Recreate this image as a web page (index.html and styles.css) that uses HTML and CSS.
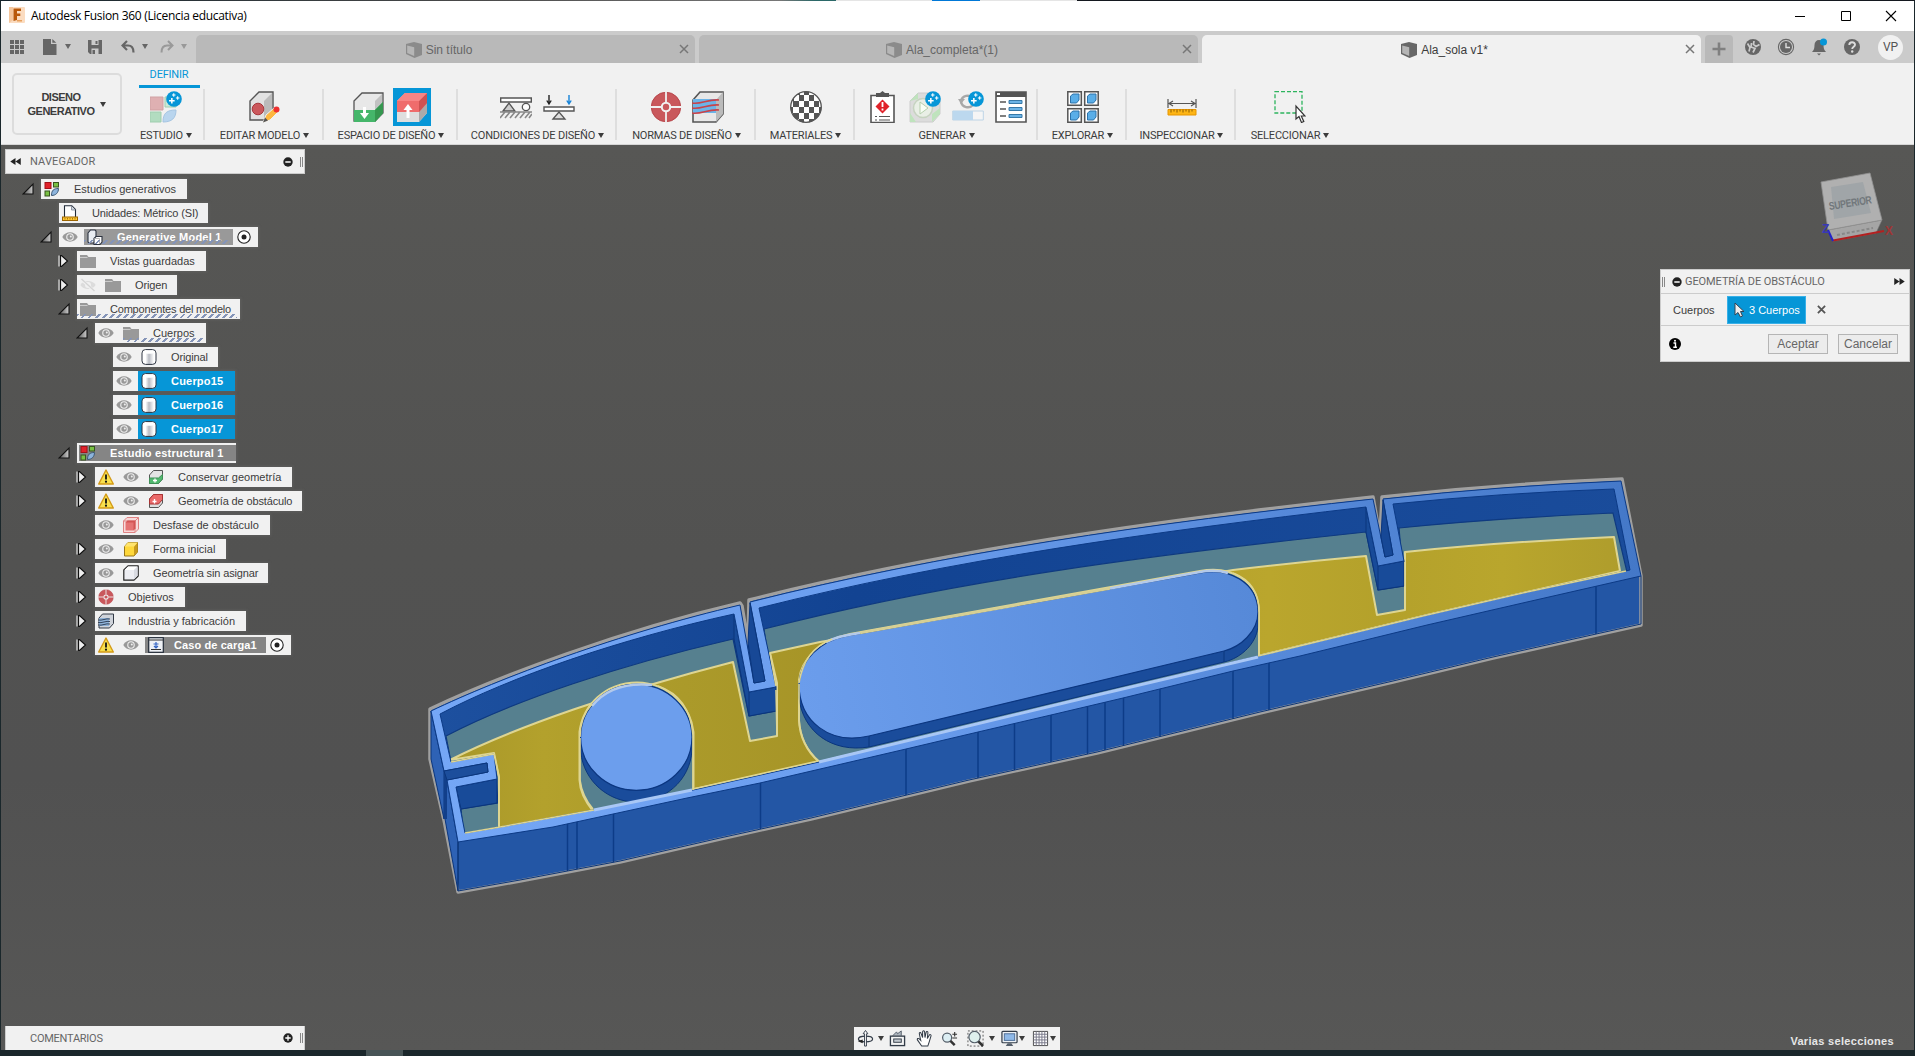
FILE: index.html
```html
<!DOCTYPE html>
<html lang="es">
<head>
<meta charset="utf-8">
<title>Autodesk Fusion 360 (Licencia educativa)</title>
<link rel="stylesheet" href="styles.css">
</head>
<body>
<svg class="sprite" aria-hidden="true">
  <defs>
    <linearGradient id="cyl" x1="0" x2="1"><stop offset="0" stop-color="#fff"/><stop offset=".25" stop-color="#fff"/><stop offset=".5" stop-color="#b9bcc4"/><stop offset=".85" stop-color="#fff"/></linearGradient>
    <linearGradient id="tri" x1="0" x2="1"><stop offset="0" stop-color="#555"/><stop offset="1" stop-color="#ccc"/></linearGradient>
    <symbol id="eye" viewBox="0 0 16 16"><path d="M.3 8C3.5 1.800 12.500 1.800 15.700 8 12.500 14.200 3.500 14.200 .3 8z" fill="#999"/><circle cx="8" cy="8" r="3.800" fill="#eee"/><circle cx="8" cy="8" r="2.700" fill="#999"/><circle cx="8.800" cy="7.600" r="1" fill="#eee"/></symbol>
    <symbol id="eye-off" viewBox="0 0 16 16"><path d="M.3 8C3.500 2.800 12.500 2.800 15.700 8 12.500 13.200 3.500 13.200 .3 8z" fill="#dcdcdc"/><circle cx="8" cy="8" r="3" fill="#f1f1f1"/><path d="M1 2l13 12" stroke="#f1f1f1" stroke-width="3"/><path d="M1.500 2l13 12" stroke="#d4d4d4" stroke-width="1.300"/></symbol>
    <symbol id="folder" viewBox="0 0 16 16"><path d="M0 2h7l1.500 2H16v11H0z" fill="#999"/><path d="M0 4.500h7.500" stroke="#ccc"/></symbol>
    <symbol id="body" viewBox="0 0 16 16"><rect x="1" y=".6" width="14" height="14.800" rx="3.500" fill="url(#cyl)" stroke="#2c3340"/><path d="M1.800 3.500C4 5.300 12 5.300 14.200 3.500V2.500L11.500 1.200H4.500L1.800 2.500z" fill="#fff"/></symbol>
    <symbol id="study" viewBox="0 0 16 16"><rect x="1" y="1.500" width="6" height="6" fill="#e0222a" stroke="#a31119"/><rect x="9.500" y="1.500" width="5" height="4.500" fill="#78c043" stroke="#38551f"/><rect x="1" y="10" width="4.500" height="5" fill="#78c043" stroke="#38551f"/><path d="M7.500 14.500c0-5 2-7 7-7 0 4-2.500 7-7 7z" fill="#8db4dc" stroke="#3c5875"/></symbol>
    <symbol id="units" viewBox="0 0 16 16"><path d="M2.500 12V.7h7.300L13.500 4.500V12" fill="#fff" stroke="#222b38" stroke-width="1.100"/><path d="M9.500 1v4h4" fill="#cfd6df" stroke="#6b7686" stroke-width=".7"/><rect x=".5" y="12" width="15" height="3.500" fill="#ffc932" stroke="#9b6400"/><path d="M3 13v1.500M5.500 13v1.500M8 13v1.500M10.500 13v1.500M13 13v1.500" stroke="#9b6400" stroke-width=".8"/></symbol>
    <symbol id="component" viewBox="0 0 16 16"><path d="M1 4L3.500 1h4.500l1 1v6l-2 6H2L1 13z" fill="#e9edf2" stroke="#2c3340" stroke-width="1.100"/><path d="M7 9.500L9 7.500h6V13l-2 2.500H7z" fill="#fff" stroke="#2c3340" stroke-width="1.100"/><path d="M7 9.500h5.500V15" fill="none" stroke="#aaa" stroke-width=".8"/></symbol>
    <symbol id="radio" viewBox="0 0 16 16"><circle cx="8" cy="8" r="6.200" fill="#fff" stroke="#222" stroke-width="1.100"/><circle cx="8" cy="8" r="2.500" fill="#222"/></symbol>
    <symbol id="warn" viewBox="0 0 16 16"><path d="M8 1L15.300 15H.7z" fill="#f8e04e" stroke="#d49a17" stroke-width="1.400" stroke-linejoin="round"/><path d="M8 5.500v5" stroke="#111" stroke-width="1.800"/><circle cx="8" cy="12.700" r="1.100" fill="#111"/></symbol>
    <symbol id="keep" viewBox="0 0 16 16"><path d="M1.500 6L5.500 1.500h9V10L10.500 14.500h-9z" fill="#e4e4e4" stroke="#555"/><path d="M1.500 9h9l4-3.500V10l-4 4.500h-9z" fill="#52b96f" stroke="#3f9157"/><path d="M5 11.500h4M7 9.500v4" stroke="#fff" stroke-width="1.300"/></symbol>
    <symbol id="obst" viewBox="0 0 16 16"><path d="M1.500 6L5.500 1.500h9V10L10.500 14.500h-9z" fill="#ddd" stroke="#555"/><path d="M1.500 6l4-4.500h9V6.500l-4 4.500h-9z" fill="#ea6a6a" stroke="#a33"/><path d="M4.500 8.500h4M6.500 6v4.500" stroke="#fff" stroke-width="1.300"/></symbol>
    <symbol id="offset" viewBox="0 0 16 16"><path d="M.5 4L4 .5h11.500V12L12 15.500H.5zM.5 4H12v11.500M12 4L15.500 .5" fill="#f7dada" stroke="#df8282"/><path d="M2.500 5.500l2-2h8v8l-2 2" fill="#d35454"/><rect x="2.500" y="5.500" width="8" height="8" fill="#e57373"/></symbol>
    <symbol id="form" viewBox="0 0 16 16"><path d="M1.500 5.500L5 1.500h9.500V11L11 15H1.500z" fill="#ffd83b" stroke="#98771a"/><path d="M11 5.500l3.500-4V11L11 15z" fill="#c99b1d"/><path d="M1.500 5.500L5 1.500h9.500l-3.500 4z" fill="#ffe46e"/></symbol>
    <symbol id="plaincube" viewBox="0 0 16 16"><path d="M.8 5L5 .8h10.200V11L11 15.200H.8z" fill="#edeef3" stroke="#222" stroke-width="1.200" stroke-linejoin="round"/><path d="M1.500 5L5 1.500h9.500L11 5z" fill="#fff"/><path d="M11 5l3.600-3.600v9.400L11 14.500z" fill="#d9dbe2"/></symbol>
    <symbol id="target" viewBox="0 0 32 32"><circle cx="16" cy="16" r="10" fill="none" stroke="#c9585c" stroke-width="9.500"/><circle cx="16" cy="16" r="14.700" fill="none" stroke="#b8474c"/><circle cx="16" cy="16" r="3.200" fill="#c9585c"/><path d="M16 0v11M16 21v11M0 16h11M21 16h11" stroke="#f1f1f1" stroke-width="1.800"/></symbol>
    <symbol id="fab" viewBox="0 0 32 32"><path d="M1 9L8 1h23v22l-7 8H1z" fill="#e8e8e8" stroke="#555" stroke-width="1.600"/><path d="M24 9l7-8v22l-7 8z" fill="#bbb"/><path d="M1 8h23v14H1z" fill="#6cb4e8"/><path d="M0 12c8 2 16-4 27-3M0 17c8 2 16-4 27-3M0 22c8 2 16-4 27-3" fill="none" stroke="#c8434a" stroke-width="1.600"/></symbol>
    <symbol id="fab-s" viewBox="0 0 16 16"><path d="M1 5L4.500 1h11v9.500L11.500 15H1z" fill="#cfd3da" stroke="#333a46"/><path d="M1 5h10v8H1z" fill="#8fb3d9"/><path d="M0 7c4 1 8-2 12-1M0 9.500c4 1 8-2 12-1M0 12c4 1 8-2 12-1" fill="none" stroke="#34445c"/></symbol>
    <symbol id="load" viewBox="0 0 16 16"><rect x=".7" y=".7" width="14.600" height="14.600" fill="#eef1f6" stroke="#222b38" stroke-width="1.200"/><path d="M1 3h14M3 12.500h10" stroke="#333"/><path d="M8 5v6M6 9l2 2 2-2M5.500 7h5" fill="none" stroke="#3465c4" stroke-width="1.200"/></symbol>
    <symbol id="open" viewBox="0 0 12 12"><path d="M11 1v10H1z" fill="url(#tri)" stroke="#111" stroke-width="1.100"/></symbol>
    <symbol id="closed" viewBox="0 0 12 14"><path d="M2.500 1.500h1L9.500 7l-6 5.500h-1z" fill="#eee" stroke="#111" stroke-width="1.200"/><path d="M1 1.500v11" stroke="#fff"/></symbol>
    <symbol id="doc" viewBox="0 0 16 16"><path d="M8 0l8 2v11l-7.500 3L0 12V2z" fill="#676767"/><path d="M1.200 3.500l7 1.800V14l-7-3z" fill="#b5b5b5"/></symbol>
    <symbol id="plus" viewBox="0 0 20 20"><circle cx="10" cy="10" r="9.800" fill="#0696d7"/><path d="M3.800 12.200h7M7.300 8.700v7" stroke="#fff" stroke-width="1.900"/><path d="M7.500 5h4.400M9.700 2.800v4.400M12.400 8.800h4.400M14.600 6.600V11" stroke="#fff" stroke-width="1.300"/></symbol>
  </defs>
</svg>

<div class="window">
  <header class="titlebar">
    <svg class="logo" viewBox="0 0 16 16"><rect width="16" height="16" rx="1" fill="#fbdcc0"/><path d="M0 0h4v13L0 16z" fill="#f5c79d"/><path d="M4.500 1.500H12V4H8v2.500h3.300V9H8v4l-3.500 1z" fill="#b9590a"/><path d="M8 13h5v1.500H8z" fill="#e8a05c"/></svg>
    <span class="title">Autodesk Fusion 360 (Licencia educativa)</span>
    <div class="winbtns">
      <svg viewBox="0 0 12 12"><path d="M1 6.500h10" stroke="#000"/></svg>
      <svg viewBox="0 0 12 12"><path d="M1.500 1.500h9v9h-9z" fill="none" stroke="#000"/></svg>
      <svg viewBox="0 0 12 12"><path d="M1 1l10 10M11 1L1 11" stroke="#000" stroke-width="1.100"/></svg>
    </div>
  </header>

  <nav class="docbar">
    <div class="quick">
      <svg class="q q1" viewBox="0 0 14 14"><path d="M0 0h4v4H0zM5 0h4v4H5zM10 0h4v4h-4zM0 5h4v4H0zM5 5h4v4H5zM10 5h4v4h-4zM0 10h4v4H0zM5 10h4v4H5zM10 10h4v4h-4z" fill="#666"/></svg>
      <svg class="q q2" viewBox="0 0 14 16"><path d="M0 0h8v5h5.500v11H0z" fill="#666"/><path d="M9.300 0v3.800h4z" fill="#666"/></svg><i class="car"></i>
      <svg class="q q3" viewBox="0 0 14 14"><path d="M0 0h14v14H2L0 12z" fill="#666"/><path d="M3.500 0h7v5h-7zM3.500 8.500h7V14h-7z" fill="#cbcbcb"/><path d="M7.500 1h2v3h-2zM4.500 10h2.500v4H4.500z" fill="#666"/></svg>
      <svg class="q q4" viewBox="0 0 14 14"><path d="M6 1L1.500 5.500 6 10M1.500 5.500H7c4 0 5.500 2.500 5.500 7" fill="none" stroke="#666" stroke-width="2.200"/></svg><i class="car"></i>
      <svg class="q q5" viewBox="0 0 14 14"><path d="M8 1l4.500 4.500L8 10M12.500 5.500H7c-4 0-5.500 2.500-5.500 7" fill="none" stroke="#999" stroke-width="2"/></svg><i class="car dim"></i>
    </div>
    <div class="tab"><svg class="dim"><use href="#doc"/></svg><span>Sin título</span><svg class="x" viewBox="0 0 10 10"><path d="M1 1l8 8M9 1L1 9" stroke="#777" stroke-width="1.500"/></svg></div>
    <div class="tab"><svg class="dim"><use href="#doc"/></svg><span>Ala_completa*(1)</span><svg class="x" viewBox="0 0 10 10"><path d="M1 1l8 8M9 1L1 9" stroke="#777" stroke-width="1.500"/></svg></div>
    <div class="tab active"><svg><use href="#doc"/></svg><span>Ala_sola v1*</span><svg class="x" viewBox="0 0 10 10"><path d="M1 1l8 8M9 1L1 9" stroke="#777" stroke-width="1.500"/></svg></div>
    <div class="newtab"><svg viewBox="0 0 14 14"><path d="M7 .5v13M.5 7h13" stroke="#808080" stroke-width="2.600"/></svg></div>
    <div class="account">
      <svg viewBox="0 0 18 18"><circle cx="9" cy="9" r="8" fill="#666"/><path d="M3.500 5.500L6 9.500l-1 4M7.500 5l-.5 4 4 1.500-2 4M10 3l-.5 3.500L12 8.500l3.500-2" fill="none" stroke="#cbcbcb" stroke-width="1.700"/></svg>
      <svg viewBox="0 0 18 18"><circle cx="9" cy="9" r="7.600" fill="none" stroke="#666" stroke-width="1.100"/><circle cx="9" cy="9" r="6" fill="#666"/><path d="M9 5v4.500h4" fill="none" stroke="#ddd" stroke-width="1.400"/></svg>
      <svg viewBox="0 0 18 18"><path d="M2 14c2-2 2.500-4 2.500-7C4.500 4 6.500 2 9 2s4.500 2 4.500 5c0 3 .5 5 2.500 7z" fill="#666"/><path d="M7 15.500h4L9 17.500z" fill="#666"/><circle cx="13.500" cy="4" r="3.500" fill="#0696d7"/></svg>
      <svg viewBox="0 0 18 18"><circle cx="9" cy="9" r="8" fill="#666"/><path d="M6.300 7c0-3.700 5.700-3.500 5.700-.3 0 2-2.800 2-2.800 4.300" fill="none" stroke="#ddd" stroke-width="1.900"/><circle cx="9.200" cy="13.500" r="1.200" fill="#ddd"/></svg>
      <span class="avatar">VP</span>
    </div>
  </nav>

  <section class="ribbon">
    <div class="space"><div class="spacebtn"><span>DISENO<br>GENERATIVO</span><i class="car"></i></div></div>
    <div class="grp g1">
      <div class="rtab">DEFINIR</div>
      <div class="icons"><svg viewBox="0 0 32 32"><path d="M0 6h13v13H0z" fill="#dfb0b2" stroke="#d0a1a3"/><path d="M0 21h11v10H0z" fill="#b2dcc0" stroke="#9fceaf"/><path d="M15 6h11v10H15z" fill="#cde8d6" stroke="#9fceaf"/><path d="M13 31c0-9 4-12 13-12 0 8-4 12-13 12z" fill="#b9d5ee" stroke="#a5c5e2"/><use href="#plus" x="16" y="0" width="16" height="16"/></svg></div>
      <div class="lbl">ESTUDIO<i class="car"></i></div>
    </div>
    <div class="grp g2"><div class="icons"><svg viewBox="0 0 32 32"><path d="M1 10L10 1h14v19l-9 9H1z" fill="#e2e2e2" stroke="#555" stroke-width="1.400"/><path d="M15 10l8-8v18l-8 8z" fill="#bbb"/><circle cx="9" cy="18" r="5.800" fill="#cb585c" stroke="#a8383d"/><path d="M14 31.500l3-7.500 8-7 4 4-8 8z" fill="#fdb740" stroke="#f1f1f1"/><path d="M14 31.500l2-5 3 3z" fill="#555"/><circle cx="27.500" cy="18.500" r="3" fill="#ee3030"/></svg></div><div class="lbl">EDITAR MODELO<i class="car"></i></div></div>
    <div class="grp g3"><div class="icons"><svg viewBox="0 0 32 32"><path d="M1 10L9 2h21v20l-8 8H1z" fill="#e8e8e8" stroke="#555" stroke-width="1.300"/><path d="M22 10l7-7v18l-7 8z" fill="#c2c2c2"/><path d="M1 19h21l8-8v11l-8 9H1z" fill="#45b66a"/><path d="M22 19l8-8v11l-8 9z" fill="#35974f"/><path d="M11.500 16v8" stroke="#fff" stroke-width="3"/><path d="M7 22h9l-4.500 6z" fill="#fff"/></svg><span class="sel"><svg viewBox="0 0 32 32"><path d="M1 10L9 2h22v20l-8 9H1z" fill="#dedede"/><path d="M23 19l8-8v11l-8 9z" fill="#aaa"/><path d="M1 10L9 2h22v10l-8 9H1z" fill="#ef6c6c"/><path d="M23 10l8-8v10l-8 9z" fill="#cd5252"/><path d="M1 10L9 2h22l-8 8z" fill="#f78585"/><path d="M12 17v10" stroke="#fff" stroke-width="3"/><path d="M7.500 19h9L12 13z" fill="#fff"/></svg></span></div><div class="lbl">ESPACIO DE DISEÑO<i class="car"></i></div></div>
    <div class="grp g4"><div class="icons"><svg viewBox="0 0 32 32"><path d="M.7 7h30.600v4H.7z" fill="#fff" stroke="#555" stroke-width="1.400"/><path d="M3 20l6-8 6 8z" fill="#ccc" stroke="#555" stroke-width="1.300"/><circle cx="26" cy="16" r="3.700" fill="#fff" stroke="#555" stroke-width="1.300"/><path d="M0 21h32M0 27l5-6M5 27l5-6M10 27l5-6M15 27l5-6M20 27l5-6M25 27l5-6M29 27l3-4" stroke="#888" stroke-width="1.600"/></svg><svg viewBox="0 0 32 32"><path d="M1 16h30v4H1z" fill="#fff" stroke="#555" stroke-width="1.400"/><path d="M10 28l6-7 6 7z" fill="#ddd" stroke="#555" stroke-width="1.300"/><path d="M6 4v9M3.800 9.500L6 13l2.200-3.500" fill="none" stroke="#222" stroke-width="1.400"/><path d="M26 4v9M23.800 9.500L26 13l2.200-3.500" fill="none" stroke="#1683d8" stroke-width="1.400"/></svg></div><div class="lbl">CONDICIONES DE DISEÑO<i class="car"></i></div></div>
    <div class="grp g5"><div class="icons"><svg viewBox="0 0 32 32"><use href="#target"/></svg><svg viewBox="0 0 32 32"><use href="#fab"/></svg></div><div class="lbl">NORMAS DE DISEÑO<i class="car"></i></div></div>
    <div class="grp g6"><div class="icons"><svg viewBox="0 0 32 32"><defs><clipPath id="ball"><circle cx="16" cy="16" r="15.500"/></clipPath></defs><g clip-path="url(#ball)"><path d="M0 0h32v32H0z" fill="#fff"/><path d="M4 0h6v4H4zM14 0h5v4h-5zM24 0h5v4h-5zM0 4h4v6H0zM9 4h5v6H9zM19 4h5v6h-5zM29 4h3v6h-3zM3 10h6v6H3zM14 10h5v6h-5zM24 10h5v6h-5zM0 16h3v6H0zM9 16h5v6H9zM19 16h5v6h-5zM29 16h3v6h-3zM3 22h6v6H3zM14 22h5v6h-5zM24 22h5v6h-5zM9 28h5v4H9zM19 28h5v4h-5z" fill="#555"/></g><circle cx="16" cy="16" r="15.300" fill="none" stroke="#555" stroke-width="1.300"/></svg></div><div class="lbl">MATERIALES<i class="car"></i></div></div>
    <div class="grp g7"><div class="icons"><svg viewBox="0 0 32 32"><path d="M5 4.500h23v27H5z" fill="#fff" stroke="#555" stroke-width="1.600"/><path d="M10 2h4l2.500-2L19 2h4v4H10z" fill="#555"/><path d="M16.500 8.500l7 7-7 7-7-7z" fill="#e0222a"/><path d="M16.500 11v5M16.500 17.500v2" stroke="#fff" stroke-width="1.800"/><path d="M13 25.500h11M13 29h11M9 25.500h2M9 29h2" stroke="#555" stroke-width="1.200"/></svg><svg viewBox="0 0 32 32"><path d="M1 10L9 2h15l7 7v14l-7 8H1z" fill="#dcdcdc" stroke="#ccc"/><path d="M1 22l6 9H1zM23 23l8-6v6l-8 8zM1 10l8-8v6z" fill="#bfe3bd"/><circle cx="14" cy="17" r="9.500" fill="#e9efe6" stroke="#c6d3c0" stroke-width="1.500"/><path d="M11 11l8 6-8 6z" fill="#f8fff5" stroke="#b6cfae"/><use href="#plus" x="16" y="0" width="16" height="16"/></svg><svg viewBox="0 0 32 32"><path d="M21 7a7 7 0 00-12 3M9 11a7 7 0 0012 3" fill="none" stroke="#a8a8a8" stroke-width="2.500"/><path d="M6 8l7 0-4 5z" fill="#a8a8a8"/><path d="M.7 20h30.600v9H.7z" fill="#f5f5f5" stroke="#bdd4e6"/><path d="M1 20h20v9H1z" fill="#bcd8ee"/><use href="#plus" x="16" y="0" width="16" height="16"/></svg><svg viewBox="0 0 32 32"><path d="M1 1h30v30H1z" fill="#fff" stroke="#555" stroke-width="1.600"/><path d="M1 1h30v5H1z" fill="#555"/><path d="M2 2h3v2H2z" fill="#fff"/><path d="M5 11h6M5 18h6M5 25h6" stroke="#555" stroke-width="1.500"/><path d="M14 9.500h13v3H14zM14 16.500h13v3H14zM14 23.500h13v3H14z" fill="#6bb3e6" stroke="#3679a9"/></svg></div><div class="lbl">GENERAR<i class="car"></i></div></div>
    <div class="grp g8"><div class="icons"><svg viewBox="0 0 32 32"><path d="M.8.800h13.500v13.500H.8zM17.700.800h13.500v13.500H17.700zM.8 17.700h13.500v13.500H.8zM17.700 17.700h13.500v13.500H17.700z" fill="#fff" stroke="#555" stroke-width="1.500"/><path d="M3.500 5l2.500-2h6v6l-2.500 3h-6zM20.500 5l2.500-2h6v6l-2.500 3h-6zM3.500 22l2.500-2h6v6l-2.500 3h-6zM20.500 22l2.500-2h6v6l-2.500 3h-6z" fill="#5aaee8" stroke="#2d73aa"/></svg></div><div class="lbl">EXPLORAR<i class="car"></i></div></div>
    <div class="grp g9"><div class="icons"><svg viewBox="0 0 32 32"><path d="M2 8v9M30 8v9M3 12.500h26M7 10l-4 2.500L7 15M25 10l4 2.500L25 15" fill="none" stroke="#555" stroke-width="1.200"/><path d="M2 18.500h28v5.500H2z" fill="#fdb515" stroke="#e79500"/><path d="M5 18.500v3M8 18.500v2M11 18.500v3M14 18.500v2M17 18.500v3M20 18.500v2M23 18.500v3M26 18.500v2" stroke="#8a5a00"/></svg></div><div class="lbl">INSPECCIONAR<i class="car"></i></div></div>
    <div class="grp g10"><div class="icons"><svg viewBox="0 0 32 32"><path d="M1 .7h27v21.300H1z" fill="none" stroke="#2db45d" stroke-width="1.300" stroke-dasharray="4 2"/><path d="M22 15v13l3-2.500 2.500 6 2.300-1-2.500-5.500H31z" fill="#fff" stroke="#333" stroke-width="1.200"/></svg></div><div class="lbl">SELECCIONAR<i class="car"></i></div></div>
  </section>

  <main class="canvas">
    <svg class="scene" viewBox="1 145 1913 905">
      <defs>
        <linearGradient id="rim" gradientUnits="userSpaceOnUse" x1="430" y1="0" x2="1641" y2="0"><stop offset="0" stop-color="#75a7f6"/><stop offset=".35" stop-color="#6b9eef"/><stop offset="1" stop-color="#4478c8"/></linearGradient>
        <linearGradient id="pill" gradientUnits="userSpaceOnUse" x1="799" y1="690" x2="1258" y2="600"><stop offset="0" stop-color="#6b9dec"/><stop offset="1" stop-color="#5689d8"/></linearGradient>
        <linearGradient id="floor" gradientUnits="userSpaceOnUse" x1="450" y1="0" x2="1620" y2="0"><stop offset="0" stop-color="#a89729"/><stop offset=".08" stop-color="#b3a12c"/><stop offset=".2" stop-color="#ab9a2a"/><stop offset=".33" stop-color="#a69427"/><stop offset=".7" stop-color="#baa62d"/><stop offset=".8" stop-color="#b4a12b"/><stop offset=".9" stop-color="#b9a62d"/><stop offset="1" stop-color="#af9d2c"/></linearGradient>
        <linearGradient id="wall" x1="0" y1="0" x2="1" y2="0"><stop offset="0" stop-color="#1d509f"/><stop offset=".35" stop-color="#124392"/><stop offset="1" stop-color="#1a4c9b"/></linearGradient>
        <clipPath id="front"><path d="M458 842L553 827 687 798 760 783 906 749 978 732 1051 715 1123 698 1233 671 1300 656 1427 625 1527 602 1641 576V624L1493 657 1393 681 1260 712 1097 752 969 780 811 818 720 838 620 861 520 880 458 891z"/></clipPath>
        <clipPath id="hole"><path d="M440 714C510 677 620 639 734 614L749 692 776 687 759 608C950 560 1150 532 1366 507L1378 566 1404 561 1393 504Q1500 493 1614 489L1630 570 1527 592 1427 615 1258 656 1097 695 819 762 693 790 593 810 500 827 465 833 456 787 497 779 494 754 451 762z"/></clipPath>
      </defs>
      <path d="M430 709C500 676 620 631 740 603L742 606 748 643 749 600C940 552 1150 521 1373 497L1380 537 1382 497Q1500 484 1622 479L1641 576V625L1493 658 1393 682 1260 713 1097 753 969 781 811 819 720 839 620 862 520 881 458 892 444 820 430 759z" fill="#2356a5" stroke="#a0a0a0" stroke-width="3.500" stroke-linejoin="round"/>
      <path d="M431 711L444 771V819L431 759zM447 780L458 842V891L445 819z" fill="#2e62b5" stroke="#0b367d"/>
      <path d="M444 771h3v48h-3z" fill="#123f8a"/>
      <g clip-path="url(#hole)">
        <path d="M430 480h1215v360H430z" fill="url(#wall)"/>
        <path d="M446 736C515 700 620 665 733 639L749 716 776 711 764 629C950 581 1150 555 1366 532L1378 590 1404 586 1399 528Q1500 518 1613 513L1627 572 1400 640 820 775 465 850 461 809 498 803 494 754 451 762z" fill="#56808f" stroke="#0f3a80" stroke-width="1.200"/>
        <path d="M450 760C515 727 620 691 733 662L750 741 777 736V683L770 653 820 642 1233 570Q1300 562 1366 556L1377 615 1405 610V552Q1500 542 1614 537L1620 571 1527 592 1427 615 1258 656 819 762 593 811 499 828V777L494 753z" fill="url(#floor)" stroke="#ded591" stroke-width="2" stroke-linejoin="round"/>
        <path d="M579.500 780V732C583 705 605 683 637 682.500 670 683 691 708 693.500 732V790L593 811Q580 795 579.500 780z" fill="#56808f" stroke="#ded591" stroke-width="2"/>
        <path d="M799 720V680C801 660 820 640 850 634L1200 571C1232 565 1259 582 1259 612V657L819 762Q800 745 799 720z" fill="#56808f" stroke="#ded591" stroke-width="2"/>
        <path d="M580.700 737.700V752C584 782 609 802 636 802S690 782 692 750V737.700z" fill="#1a4c9b" stroke="#0b367d"/>
        <path d="M799 684V698C803 732 832 753 869 747L1224 662C1242 658 1258 642 1258 624V612L1224 640z" fill="#1a4c9b" stroke="#0b367d"/>
        <path d="M869 735v12M1224 650v12" stroke="#0b367d"/>
      </g>
      <path d="M734 614V639L749 716 776 711V687L749 692zM1366 507V532L1378 590 1404 586V561L1378 566z" fill="#184b99" stroke="#0b367d"/>
      <path d="M749 692v24M1378 566v24" stroke="#0b367d"/>
      <path d="M456 787L497 779V803L461 809z" fill="#184b99" stroke="#0b367d"/>
      <path fill-rule="evenodd" d="M431 711C500 678 620 633 740 605L754 683 765 681 750 602C940 554 1150 523 1373 499L1385 557 1393 555 1383 499Q1500 486 1621 481L1641 576 1527 602 1427 625 1300 656 1233 671 1123 698 1051 715 978 732 906 749 760 783 687 798 553 827 458 842 447 780 488 772 487 763 444 771z M440 714C510 677 620 639 734 614L749 692 776 687 759 608C950 560 1150 532 1366 507L1378 566 1404 561 1393 504Q1500 493 1614 489L1630 570 1527 592 1427 615 1258 656 1097 695 819 762 693 790 593 810 500 827 465 833 456 787 497 779 494 754 451 762z" fill="url(#rim)" stroke="#0c3a86" stroke-width="1"/>
      <path d="M750 603L765 681 754 683 748 643zM1383 500L1393 555 1385 557 1381 537z" fill="#174896" stroke="#0b367d"/>
      <path d="M444 771L487 763 488 772 447 780z" fill="#1c4e9c" stroke="#0b367d"/>
      <path d="M451 762L494 754 499 777V827M776 690L777 736M1405 562V610M770 653L776 686M1626 571L1527 592 1427 615 1258 656M818 761L693 789M594 810L500 827 465 833" fill="none" stroke="#ded591" stroke-width="1.600"/>
      <ellipse cx="636.300" cy="737.300" rx="55.700" ry="53" fill="#6c9eed" stroke="#0b3680" stroke-width="1.200"/>
      <path d="M847 636L1200 573C1228 567 1258 582 1258 612 1258 632 1240 647 1224 651L869 736C830 745 799 722 799 684 800 660 820 641 847 636z" fill="url(#pill)" stroke="#0b3680" stroke-width="1.200"/>
      <path d="M592 706Q612 681 652 685M1110 588.500L1200 572Q1215 569 1228 573M826 642Q838 636 860 633" fill="none" stroke="#b3c9ea" stroke-width="2.600"/>
      <path d="M860 633L1110 588.500" stroke="#d6cf95" stroke-width="2.500"/>
      <path d="M594 810L692 790M819 762L1097 695 1258 657" fill="none" stroke="#a9c7f5" stroke-width="3"/>
      <path d="M693 735V790M799 684V720Q801 746 819 761M580 738V780Q582 796 593 809M1259 612V656M799 683Q804 650 832 639M1233 573Q1259 583 1259 612M658 686Q690 697 693 735M580 737Q580 717 592 704" fill="none" stroke="#ded591" stroke-width="1.600"/>
      <g clip-path="url(#front)"><path d="M567.500 780v130M577 780v130M613.500 780v130M760.500 740v130M906 720v130M978 700v130M1014.500 700v130M1051 680v130M1087.500 680v130M1105 660v130M1123.500 660v130M1160 640v130M1233 640v130M1269 630v130M1596 560v130" stroke="#0d3c88" stroke-width="1.500"/></g>
      <path d="M458 842v48M520 880L458 891M1641 576v48L1493 657 1393 681 1260 712 1097 752 969 780 811 818 720 838 620 861 520 880" fill="none" stroke="#0b3476"/>

      <g>
        <path d="M1828 230l54-10-6 13-43 8z" fill="#a5a5a5" stroke="#777" stroke-width=".6"/>
        <path d="M1821 182l49-9 12 47-54 10z" fill="#b0b0b0" stroke="#909090" stroke-width=".8"/>
        <path d="M1831 187l32-5 8 31-37 6z" fill="#a0a5a8"/>
        <path d="M1837 235l36-7" stroke="#888" stroke-width="2" stroke-dasharray="3 2"/>
        <path d="M1833 240.500l51-9.500" stroke="#b32020" stroke-width="2.200"/>
        <path d="M1828 230l5 11" stroke="#2323c8" stroke-width="2"/>
        <text class="cube" transform="translate(1829.500 210) rotate(-9) scale(.82 1.05)">SUPERIOR</text>
        <text class="axis ax" x="1885" y="235">X</text><text class="axis az" x="1822" y="233">Z</text>
      </g>
    </svg>

    <aside class="browser">
      <div class="phead"><svg class="rew" viewBox="0 0 12 8"><path d="M6 0v8L0 4zM12 0v8L6 4z" fill="#222"/></svg><span>NAVEGADOR</span><svg class="pm" viewBox="0 0 10 10"><circle cx="5" cy="5" r="4.700" fill="#222"/><path d="M2.300 5h5.400" stroke="#fff" stroke-width="1.500"/></svg><i class="grip"></i></div>
      <div class="tree">
        <div class="row l0"><svg class="tw"><use href="#open"/></svg><div class="box"><svg><use href="#study"/></svg><span>Estudios generativos</span></div></div>
        <div class="row l1 tight"><div class="box"><svg><use href="#units"/></svg><span>Unidades: Métrico (SI)</span></div></div>
        <div class="row l1"><svg class="tw"><use href="#open"/></svg><div class="box"><svg><use href="#eye"/></svg><div class="mark light hatch"><svg><use href="#component"/></svg><span>Generative Model 1</span></div><svg><use href="#radio"/></svg></div></div>
        <div class="row l2"><svg class="tw"><use href="#closed"/></svg><div class="box"><svg><use href="#folder"/></svg><span>Vistas guardadas</span></div></div>
        <div class="row l2 tight"><svg class="tw"><use href="#closed"/></svg><div class="box"><svg><use href="#eye-off"/></svg><svg><use href="#folder"/></svg><span>Origen</span></div></div>
        <div class="row l2 tighter"><svg class="tw"><use href="#open"/></svg><div class="box hatch"><svg><use href="#folder"/></svg><span>Componentes del modelo</span></div></div>
        <div class="row l3"><svg class="tw"><use href="#open"/></svg><div class="box"><svg><use href="#eye"/></svg><div class="sub hatch"><svg><use href="#folder"/></svg><span>Cuerpos</span></div></div></div>
        <div class="row l4 tight"><div class="box"><svg><use href="#eye"/></svg><svg><use href="#body"/></svg><span>Original</span></div></div>
        <div class="row l4"><div class="box"><svg><use href="#eye"/></svg><div class="mark blue"><svg><use href="#body"/></svg><span>Cuerpo15</span></div></div></div>
        <div class="row l4"><div class="box"><svg><use href="#eye"/></svg><div class="mark blue"><svg><use href="#body"/></svg><span>Cuerpo16</span></div></div></div>
        <div class="row l4"><div class="box"><svg><use href="#eye"/></svg><div class="mark blue"><svg><use href="#body"/></svg><span>Cuerpo17</span></div></div></div>
        <div class="row l2"><svg class="tw"><use href="#open"/></svg><div class="box study"><div class="mark"><svg><use href="#study"/></svg><span>Estudio estructural 1</span></div></div></div>
        <div class="row l3"><svg class="tw"><use href="#closed"/></svg><div class="box"><svg><use href="#warn"/></svg><svg><use href="#eye"/></svg><svg><use href="#keep"/></svg><span>Conservar geometría</span></div></div>
        <div class="row l3 tight"><svg class="tw"><use href="#closed"/></svg><div class="box"><svg><use href="#warn"/></svg><svg><use href="#eye"/></svg><svg><use href="#obst"/></svg><span>Geometría de obstáculo</span></div></div>
        <div class="row l3"><div class="box"><svg><use href="#eye"/></svg><svg><use href="#offset"/></svg><span>Desfase de obstáculo</span></div></div>
        <div class="row l3"><svg class="tw"><use href="#closed"/></svg><div class="box"><svg><use href="#eye"/></svg><svg><use href="#form"/></svg><span>Forma inicial</span></div></div>
        <div class="row l3 tight"><svg class="tw"><use href="#closed"/></svg><div class="box"><svg><use href="#eye"/></svg><svg><use href="#plaincube"/></svg><span>Geometría sin asignar</span></div></div>
        <div class="row l3"><svg class="tw"><use href="#closed"/></svg><div class="box"><svg><use href="#target"/></svg><span>Objetivos</span></div></div>
        <div class="row l3"><svg class="tw"><use href="#closed"/></svg><div class="box"><svg><use href="#fab-s"/></svg><span>Industria y fabricación</span></div></div>
        <div class="row l3"><svg class="tw"><use href="#closed"/></svg><div class="box"><svg><use href="#warn"/></svg><svg><use href="#eye"/></svg><div class="mark load"><svg><use href="#load"/></svg><span>Caso de carga1</span></div><svg><use href="#radio"/></svg></div></div>
      </div>
    </aside>

    <section class="dialog">
      <div class="dhead"><i class="grip"></i><svg class="pm" viewBox="0 0 10 10"><circle cx="5" cy="5" r="4.700" fill="#222"/><path d="M2.300 5h5.400" stroke="#fff" stroke-width="1.500"/></svg><span>GEOMETRÍA DE OBSTÁCULO</span><svg class="ff" viewBox="0 0 12 8"><path d="M0 0v8l6-4zM6 0v8l6-4z" fill="#222"/></svg></div>
      <div class="dbody"><label>Cuerpos</label><button class="pick"><svg viewBox="0 0 11 16"><path d="M1 1v12l3-2.500L6.500 15l2-1L6.500 9.500H10z" fill="#eee" stroke="#345" /></svg>3 Cuerpos</button><svg class="clr" viewBox="0 0 10 10"><path d="M1 1l8 8M9 1L1 9" stroke="#555" stroke-width="2"/></svg></div>
      <div class="dfoot"><svg class="info" viewBox="0 0 12 12"><circle cx="6" cy="6" r="6" fill="#000"/><path d="M4.500 5h2v4M4.300 9.300h3.600" stroke="#fff" stroke-width="1.400" fill="none"/><circle cx="6" cy="2.800" r="1" fill="#fff"/></svg><button>Aceptar</button><button>Cancelar</button></div>
    </section>

    <div class="comments"><span>COMENTARIOS</span><svg class="pm" viewBox="0 0 10 10"><circle cx="5" cy="5" r="4.700" fill="#222"/><path d="M2.300 5h5.400M5 2.300v5.400" stroke="#fff" stroke-width="1.300"/></svg><i class="grip"></i></div>

    <div class="navbar">
      <svg class="n1" viewBox="0 0 18 18"><ellipse cx="9" cy="9.500" rx="7.500" ry="3" fill="none" stroke="#333c48" stroke-width="1.300"/><path d="M8 17V4H6.500L9 .5 11.500 4H10v13z" fill="#fff" stroke="#333c48"/><path d="M1 12l5-2v4z" fill="#222"/></svg><i class="car"></i>
      <svg class="n2" viewBox="0 0 18 18"><path d="M4 6l4-4 1 2 4-3v5" fill="#aeb6bf" stroke="#555f6b"/><rect x="1.500" y="6.500" width="15" height="10" fill="#f5f5f5" stroke="#333c48" stroke-width="1.400"/><rect x="5" y="9.500" width="8" height="3.500" fill="#c4cad0" stroke="#333c48"/></svg>
      <svg class="n3" viewBox="0 0 18 18"><path d="M6 17L1.500 10.500C.8 9 2.500 8.500 3.500 9.500L5 11 3.500 4C3.300 2.500 5 2.300 5.400 3.700L7 8 7 2C7 .5 9 .5 9.100 2L9.500 8l1.200-5.500c.3-1.400 2-1.100 1.900.3L12 9l2-3.500c.7-1.300 2.300-.5 1.900.8L14 12.500 12.500 17z" fill="#fff" stroke="#333c48" stroke-width="1.100"/></svg>
      <svg class="n4" viewBox="0 0 18 18"><circle cx="6.500" cy="8" r="4.800" fill="#dceef3" stroke="#56606b" stroke-width="1.300"/><path d="M10 11.500l4.500 4.500" stroke="#333" stroke-width="2.600"/><path d="M12 4.500h5M14.500 2v5M12 8.500h5" stroke="#333" stroke-width="1.200"/></svg>
      <svg class="n5" viewBox="0 0 18 18"><path d="M1 1h16v16H1z" fill="none" stroke="#555" stroke-dasharray="2 2"/><circle cx="8" cy="7.500" r="6" fill="#dff0ee" stroke="#56606b" stroke-width="1.300"/><path d="M12 12l5 5" stroke="#333" stroke-width="2.800"/></svg><i class="car"></i>
      <svg class="n6" viewBox="0 0 18 18"><rect x="1" y="1.500" width="16" height="12" rx="1" fill="#eef2f6" stroke="#333c48" stroke-width="1.300"/><rect x="3.500" y="4" width="11" height="7" fill="#8fb9e8" stroke="#4c6d96"/><path d="M7 14h4l2 3H5z" fill="#555f6b"/></svg><i class="car"></i>
      <svg class="n7" viewBox="0 0 18 18"><path d="M1.500 1.500h15v15h-15z" fill="#fff" stroke="#444"/><path d="M4.500 1.500v15M7.500 1.500v15M10.500 1.500v15M13.500 1.500v15M1.500 4.500h15M1.500 7.500h15M1.500 10.500h15M1.500 13.500h15" stroke="#778"/></svg><i class="car"></i>
    </div>
    <div class="status">Varias selecciones</div>
  </main>
</div>
</body>
</html>
```
FILE: styles.css
```css
* { box-sizing: border-box; }
body {
  margin: 0;
  width: 1915px;
  height: 1056px;
  overflow: hidden;
  font: 11px "Liberation Sans", Arial, sans-serif;
  color: #3c3c3c;
  padding: 1px 1px 6px;
  background:
    linear-gradient(#475456, #475456) 366px 1050px / 37px 6px no-repeat,
    linear-gradient(90deg, #14232b 0, #4a4a4a 480px, #777 780px, #2b6868 815px 836px, #e5e5e5 836px 932px, #0078d7 932px 980px, #e5e5e5 980px 1077px, #14181f 1077px) 0 0 / 100% 1px no-repeat,
    #1a272b;
}
svg { display: block; flex: none; }
.sprite { position: absolute; width: 0; height: 0; }
button { font: inherit; padding: 0; }
.window { height: 1049px; display: flex; flex-direction: column; }
.car { flex: none; display: block; width: 0; height: 0; border: 3.5px solid transparent; border-top: 5px solid #3c3c3c; border-bottom: 0; }

.titlebar { height: 30px; background: #fff; display: flex; align-items: center; padding-left: 8px; color: #000; }
.logo { width: 16px; height: 16px; margin: 0 6px 2px 0; }
.title { font: 12px "Open Sans", sans-serif; letter-spacing: -.31px; padding-bottom: 1px; }
.winbtns { margin-left: auto; display: flex; gap: 33.5px; padding: 0 17px 1px 0; }
.winbtns svg { width: 12px; height: 12px; }

.docbar { height: 32px; background: #cbcbcb; display: flex; align-items: flex-end; }
.quick { width: 195px; height: 32px; display: flex; align-items: center; padding-left: 9px; flex: none; }
.quick .car { border-top-color: #666; margin-bottom: 2px; }
.quick .car.dim { border-top-color: #999; }
.q { width: 14px; height: 14px; }
.q2 { height: 16px; margin: 0 8px 0 19px; }
.q3 { margin: 0 19px 0 17px; }
.q4 { margin-right: 7px; }
.q5 { margin: 0 7px 0 12px; }
.tab { width: 499px; height: 28px; margin-right: 4px; border-radius: 5px 5px 0 0; background: #b9b9b9; color: #666; flex: none; display: flex; align-items: center; justify-content: center; position: relative; font-size: 12px; gap: 4px; padding: 1px 13px 0 0; }
.tab > svg:first-child { width: 16px; height: 16px; }
.tab .dim { opacity: .55; }
.tab .x { position: absolute; right: 6px; top: 9px; width: 10px; height: 10px; }
.tab span { padding-top: 1px; }
.tab.active { background: #f1f1f1; color: #3c3c3c; padding-right: 14px; }
.newtab { width: 28px; height: 28px; background: #b9b9b9; border-radius: 4px 4px 0 0; display: grid; place-items: center; }
.newtab svg { width: 14px; height: 14px; }
.account { display: flex; align-items: center; height: 32px; padding-left: 11px; gap: 15px; }
.account svg { width: 18px; height: 18px; }
.avatar { width: 25px; height: 25px; border-radius: 50%; background: #f1f1f1; color: #555; display: grid; place-items: center; font: 12px Roboto, sans-serif; margin-left: 2px; }

.ribbon { height: 82px; background: #f1f1f1; border-bottom: 1px solid #d6d6d6; display: flex; }
.space { width: 126px; padding: 10px 5px 0 11px; }
.spacebtn { height: 62px; border: 2px solid #dcdcdc; border-radius: 5px; display: flex; align-items: center; justify-content: center; gap: 6px; font: bold 11px/14px "Liberation Sans", sans-serif; letter-spacing: -.5px; text-align: center; }
.grp { display: flex; flex-direction: column; align-items: center; justify-content: flex-end; position: relative; }
.grp:not(.g10)::after { content: ""; position: absolute; right: 0; top: 26px; height: 51px; width: 2px; background: #dedede; }
.g1 { width: 78px; } .g2 { width: 119px; } .g3 { width: 134px; } .g4 { width: 159px; } .g5 { width: 139px; }
.g6 { width: 99px; } .g7 { width: 183px; } .g8 { width: 89px; } .g9 { width: 109px; } .g10 { width: 108px; }
.rtab { width: 61px; height: 21px; border-bottom: 3px solid #0696d7; color: #0696d7; font: 11px/16px Roboto, sans-serif; letter-spacing: -.2px; text-align: center; margin-left: 6px; }
.icons { height: 38px; display: flex; align-items: center; gap: 10px; }
.icons svg { width: 32px; height: 32px; }
.g3 .icons { gap: 8px; padding-left: 2px; }
.g4 .icons { gap: 11px; }
.g7 .icons { gap: 11px; }
.sel { width: 38px; height: 38px; background: #0696d7; display: grid; place-items: center; }
.lbl { height: 18px; display: flex; align-items: center; gap: 3px; font: 11px Roboto, sans-serif; letter-spacing: -.2px; white-space: nowrap; }

.canvas { flex: 1; position: relative; background: linear-gradient(#575755, #525251 45%, #515151 70%, #575756); overflow: hidden; }
.scene { position: absolute; inset: 0; width: 1913px; height: 905px; }
.cube { font: bold 10.5px "Liberation Sans", sans-serif; fill: #71777b; letter-spacing: -.3px; }
.axis { font: bold 12px "Liberation Sans", sans-serif; }
.ax { fill: #a03535; }
.az { fill: #3838b8; }

.grip { display: block; width: 3px; height: 10px; border: solid #888; border-width: 0 1px; }
.pm { width: 10px; height: 10px; }
.browser { position: absolute; left: 4px; top: 4px; width: 300px; }
.phead, .comments { height: 25px; background: #f1f1f1; border: 1px solid #ccc; display: flex; align-items: center; padding: 0 1px 0 4px; color: #666; }
.phead span, .comments span, .dhead span { font: 11px Roboto, sans-serif; }
.phead span { letter-spacing: .15px; }
.phead .rew { width: 11px; height: 7px; margin-right: 9px; }
.phead .pm, .comments .pm { margin: 0 7px 0 auto; }
.tree { padding-top: 5px; }
.row { height: 20px; margin-bottom: 4px; display: flex; justify-content: flex-start; align-items: center; position: relative; }
.l0 { padding-left: 36px; } .l1 { padding-left: 54px; } .l2 { padding-left: 72px; } .l3 { padding-left: 90px; } .l4 { padding-left: 108px; }
.tw { width: 12px; height: 14px; margin-left: -19px; margin-right: 7px; }
.box { height: 20px; background: #f1f1f1; display: flex; align-items: center; padding-left: 3px; white-space: nowrap; box-shadow: 0 0 3px 1px rgba(150,150,150,.18); }
.box svg { width: 16px; height: 16px; margin-right: 9px; }
.box span { padding: 0 11px 0 5px; }
.tight span { letter-spacing: -.14px; padding-right: 10px; }
.tighter span { letter-spacing: -.2px; padding-right: 9px; }
.mark { height: 16px; background: #858585; color: #fff; font-weight: bold; display: flex; align-items: center; padding-left: 3px; margin-left: -3px; }
.mark.light { background: #999; }
.mark.blue { height: 20px; background: #0696d7; }
.mark + svg { margin: 0 6px 0 3px; }
.mark span { letter-spacing: .2px; padding-right: 12px; }
.box.study { padding-left: 2px; }
.study .mark { margin-left: 0; padding-left: 1px; height: 16px; }
.mark.load span { padding: 0 9px 0 1px; letter-spacing: .1px; }
.sub { height: 20px; display: flex; align-items: center; }
.hatch { position: relative; }
.hatch::after { content: ""; position: absolute; left: 0; right: 3px; bottom: 1px; height: 4px; background: repeating-linear-gradient(135deg, #8494b8 0 2px, transparent 2px 5px); }

.dialog { position: absolute; left: 1659px; top: 124px; width: 250px; height: 93px; background: #f1f1f1; border: 1px solid #ccc; }
.dhead { height: 24px; display: flex; align-items: center; padding: 0 4px 0 1px; color: #666; border-bottom: 1px solid #ccc; }
.dhead .pm { margin: 0 3px 0 7px; }
.dhead span { letter-spacing: -.08px; }
.ff { width: 11px; height: 7px; margin-left: auto; }
.dbody { height: 32px; border-bottom: 1px solid #ccc; display: flex; align-items: center; padding-left: 12px; }
.dbody label { width: 54px; }
.pick { width: 79px; height: 28px; background: #0696d7; border: 1px solid #37b0e8; color: #fff; display: flex; align-items: center; gap: 4px; padding-left: 6px; }
.pick svg { width: 11px; height: 16px; }
.clr { width: 9px; height: 9px; margin-left: 11px; }
.dfoot { height: 35px; display: flex; align-items: center; padding-left: 8px; }
.info { width: 12px; height: 12px; margin-right: 87px; }
.dfoot button { width: 60px; height: 20px; margin-right: 10px; border: 1px solid #b5b5b5; background: #ececec; color: #666; font-size: 12px; }

.comments { position: absolute; left: 4px; bottom: 0; width: 300px; height: 24px; padding-left: 24px; border-bottom: 0; border-top: 0; }
.comments span { letter-spacing: -.25px; }
.navbar { position: absolute; left: 853px; bottom: 0; width: 206px; height: 23px; background: #f1f1f1; display: flex; align-items: center; padding-left: 3px; }
.navbar svg { width: 17px; height: 17px; }
.n1 { margin-right: 4px; } .n2 { margin-left: 5px; margin-right: 10px; } .n3 { margin-right: 8px; } .n4 { margin-right: 9px; }
.n5 { margin-right: 5px; } .n6 { margin-left: 6px; margin-right: 1px; } .n7 { margin-left: 7px; margin-right: 1px; }
.status { position: absolute; right: 20px; bottom: 3px; color: #e6e6e6; font-weight: bold; letter-spacing: .32px; }
```
